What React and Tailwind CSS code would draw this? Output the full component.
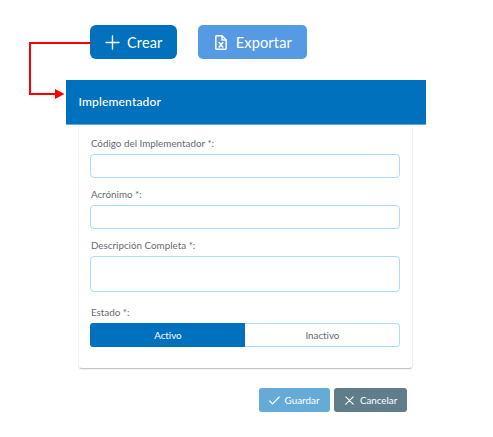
function Field({ label, className = "", children }) {
  return (
    <div className={className}>
      <div className="h-[23px] whitespace-nowrap pl-[0.5px] pt-[4px] text-[9.8px] leading-[16px] tracking-[0.02px] text-[#646b73]">{label}</div>
      {children}
    </div>
  );
}

function Connector() {
  return (
    <svg className="absolute left-0 top-0" width="100" height="110" viewBox="0 0 100 110" fill="none">
      <path d="M91 43H30V94H56" stroke="#ff0000" strokeWidth="2" />
      <path d="M55 89L64.500 94L55 99Z" fill="#ff0000" />
    </svg>
  );
}

function PlusIcon() {
  return (
    <svg width="15" height="15" viewBox="0 0 15 15" fill="none" stroke="white" strokeWidth="1.400" strokeLinecap="round">
      <path d="M7.500 1V14M1 7.500H14" />
    </svg>
  );
}

function ExcelIcon() {
  return (
    <svg width="12" height="15" viewBox="0 0 12 15" fill="none" stroke="white" strokeWidth="1.500" strokeLinejoin="round" strokeLinecap="round">
      <path d="M1.700 .8H7L11.200 5V13.200Q11.200 14.200 10.200 14.200H1.800Q.8 14.200 .8 13.200V1.800Q.8 .8 1.700 .8Z" />
      <path d="M7 1V5H11" />
      <path d="M4.200 7.600L7.800 12M7.800 7.600L4.200 12" strokeWidth="1.600" />
    </svg>
  );
}

export default function App() {
  return (
    <div className="relative h-[437px] w-[493px] overflow-hidden bg-white font-['Lato',sans-serif] [font-variant-ligatures:none]">
      <div className="ml-[90.4px] flex gap-[21px] pt-[25px] text-[14.5px] text-white">
        <button className="flex h-[34px] w-[86.8px] items-center rounded-[6px] bg-[#0071bc] pl-[14.6px]">
          <PlusIcon />
          <span className="ml-[7px] pt-[2px] tracking-[0.15px]">Crear</span>
        </button>
        <button className="flex h-[34px] w-[108.5px] items-center rounded-[5px] bg-[#569ae3] pl-[17px]">
          <ExcelIcon />
          <span className="ml-[8.5px] pt-[2px] tracking-[0.18px]">Exportar</span>
        </button>
      </div>

      <header className="ml-[66px] mt-[21px] flex h-[44px] w-[360px] items-center bg-[#0071bc] pl-[12.5px] text-[12px] font-medium text-white">
        <span className="tracking-[0.16px]">Implementador</span>
      </header>
      <div className="ml-[66px] h-px w-[360px] bg-[#62aadb]" />

      <main className="ml-[78px] h-[244px] w-[335px] rounded-b-[4px] border-x border-b border-x-[#f1f1f1] border-b-[#c5c5c5] px-[11.4px] pt-[6px] shadow-[0_1px_1px_rgba(0,0,0,0.06)]">
        <Field label="Código del Implementador *:">
          <div className="h-[24px] w-[310px] rounded-[4px] border border-[#addcf9]" />
        </Field>
        <Field label="Acrónimo *:" className="mt-[4.4px]">
          <div className="h-[24px] w-[310px] rounded-[4px] border border-[#addcf9]" />
        </Field>
        <Field label="Descripción Completa *:" className="mt-[4px]">
          <div className="h-[36px] w-[310px] rounded-[4px] border border-[#addcf9]" />
        </Field>
        <Field label="Estado *:" className="mt-[7.6px]">
          <div className="flex h-[24px] w-[310px] text-[9.8px]">
            <div className="flex w-[155px] items-center justify-center rounded-l-[3px] bg-[#0071bc] text-white">Activo</div>
            <div className="flex w-[155px] items-center justify-center rounded-r-[4px] border border-l-0 border-[#addcf9] text-[#646b73]">Inactivo</div>
          </div>
        </Field>
      </main>

      <footer className="ml-[259px] mt-[19px] flex gap-[4.4px] text-[9.8px] text-white">
        <button className="flex h-[24px] w-[71px] items-center rounded-[3px] bg-[#66aad7] pl-[10px]">
          <svg width="11" height="9" viewBox="0 0 11 9" fill="none" stroke="white" strokeWidth="1.100" strokeLinecap="round" strokeLinejoin="round"><path d="M.7 5L3.500 7.800L10.200 1" /></svg>
          <span className="ml-[4.5px] tracking-[0.06px]">Guardar</span>
        </button>
        <button className="flex h-[24px] w-[72.6px] items-center rounded-[3px] bg-[#607d8b] pl-[11px]">
          <svg width="9" height="9" viewBox="0 0 9 9" fill="none" stroke="white" strokeWidth="1.200" strokeLinecap="round"><path d="M.8 .8L8.200 8.200M8.200 .8L.8 8.200" /></svg>
          <span className="ml-[5.5px]">Cancelar</span>
        </button>
      </footer>
      <Connector />
    </div>
  );
}
